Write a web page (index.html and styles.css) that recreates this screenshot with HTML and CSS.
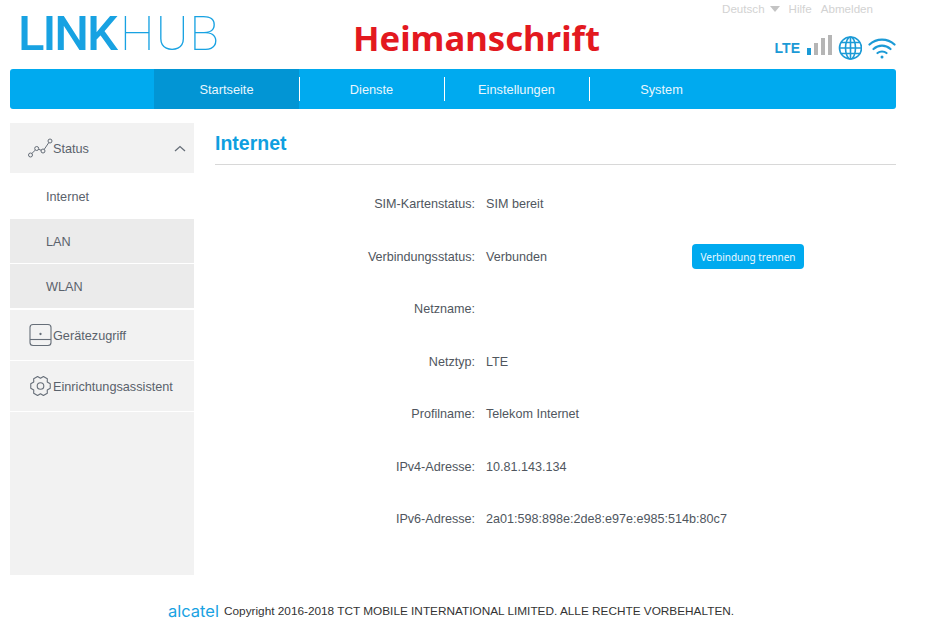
FILE: index.html
```html
<!DOCTYPE html>
<html lang="de">
<head>
    <meta charset="UTF-8">
    <meta name="viewport" content="width=device-width, initial-scale=1.0">
    <title>LinkHub</title>
    <link rel="stylesheet" href="styles.css">
</head>
<body>
    <div class="page">
        <header class="header">
            <div class="logo"><b>LINK</b><span>HUB</span></div>
            <div class="address">Heimanschrift</div>
            <div class="header-right">
                <div class="top-links">
                    <span>Deutsch</span>
                    <span class="caret"></span>
                    <span class="top-link">Hilfe</span>
                    <span>Abmelden</span>
                </div>
                <div class="status-icons">
                    <span class="lte">LTE</span>
                    <svg class="bars" width="25" height="20" viewBox="0 0 25 20">
                        <rect x="0" y="13" width="4" height="7" fill="#1b9ad6"/>
                        <rect x="7" y="8" width="4" height="12" fill="#b5b5b5"/>
                        <rect x="14" y="3" width="4" height="17" fill="#b5b5b5"/>
                        <rect x="21" y="0" width="4" height="20" fill="#b5b5b5"/>
                    </svg>
                    <svg width="24" height="24" viewBox="0 0 24 24" fill="none" stroke="#1b9ad6" stroke-width="1.6">
                        <circle cx="12.500" cy="12" r="11"/>
                        <ellipse cx="12.500" cy="12" rx="5" ry="11"/>
                        <path d="M12.500 1v22M1.500 12h22M3.100 6.500h18.800M3.100 17.500h18.800"/>
                    </svg>
                    <svg width="28" height="22" viewBox="0 0 28 22" fill="none" stroke="#1b9ad6" stroke-width="2.2" stroke-linecap="round">
                        <path d="M1.500 7.500C8.500 1 19.500 1 26.500 7.500"/>
                        <path d="M5.500 12C10.500 7.500 17.500 7.500 22.500 12"/>
                        <path d="M9.500 16C12 14 16 14 18.500 16"/>
                        <circle cx="14" cy="20" r="1.500" fill="#1b9ad6" stroke="none"/>
                    </svg>
                </div>
            </div>
        </header>

        <nav class="nav">
            <a class="nav-item active">Startseite</a>
            <a class="nav-item">Dienste</a>
            <a class="nav-item">Einstellungen</a>
            <a class="nav-item last">System</a>
        </nav>

        <div class="content">
            <aside class="sidebar">
                <div class="side-head first">
                    <svg width="25" height="20" viewBox="0 0 25 20" fill="none" stroke="#666e78" stroke-width="1">
                        <circle cx="2.500" cy="17" r="2"/>
                        <circle cx="8.700" cy="10.500" r="2"/>
                        <circle cx="15" cy="13" r="2"/>
                        <circle cx="22" cy="3" r="2"/>
                        <path d="M3.800 15.500L7.400 12M10.500 11.200L13.200 12.300M16.200 11.400L20.800 4.600"/>
                    </svg>
                    <span>Status</span>
                    <svg class="chevron" width="12" height="7" viewBox="0 0 12 7" fill="none" stroke="#666e78" stroke-width="1.300">
                        <path d="M1 6L6 1.500L11 6"/>
                    </svg>
                </div>
                <div class="side-sub current">Internet</div>
                <div class="side-sub">LAN</div>
                <div class="side-sub last">WLAN</div>
                <div class="side-head">
                    <svg width="25" height="24" viewBox="0 0 25 24" fill="none" stroke="#666e78" stroke-width="1.100">
                        <rect x="2" y="1.500" width="21" height="21" rx="3"/>
                        <path d="M2 16.500H23"/>
                        <circle cx="12.500" cy="11" r="0.600" fill="#666e78"/>
                    </svg>
                    <span>Gerätezugriff</span>
                </div>
                <div class="side-head">
                    <svg width="25" height="22" viewBox="-1.500 0 25 22" fill="none" stroke="#666e78" stroke-width="1.100" stroke-linejoin="round">
                        <path d="M20.740 8.750L20.740 13.250L17.750 14.900L17.820 18.310L13.920 20.560L11 18.800L8.080 20.560L4.180 18.310L4.250 14.900L1.260 13.250L1.260 8.750L4.250 7.100L4.180 3.690L8.080 1.440L11 3.200L13.920 1.440L17.820 3.690L17.750 7.100Z"/>
                        <circle cx="11" cy="11" r="3.300"/>
                    </svg>
                    <span>Einrichtungsassistent</span>
                </div>
            </aside>

            <main class="main">
                <h1 class="title">Internet</h1>
                <div class="rows">
                    <div class="row"><label>SIM-Kartenstatus:</label><span>SIM bereit</span></div>
                    <div class="row">
                        <label>Verbindungsstatus:</label><span class="value-short">Verbunden</span>
                        <button class="btn">Verbindung trennen</button>
                    </div>
                    <div class="row"><label>Netzname:</label><span></span></div>
                    <div class="row"><label>Netztyp:</label><span>LTE</span></div>
                    <div class="row"><label>Profilname:</label><span>Telekom Internet</span></div>
                    <div class="row"><label>IPv4-Adresse:</label><span>10.81.143.134</span></div>
                    <div class="row"><label>IPv6-Adresse:</label><span>2a01:598:898e:2de8:e97e:e985:514b:80c7</span></div>
                </div>
            </main>
        </div>

        <footer class="footer">
            <span class="alcatel">alcatel</span>
            <span>Copyright 2016-2018 TCT MOBILE INTERNATIONAL LIMITED. ALLE RECHTE VORBEHALTEN.</span>
        </footer>
    </div>
</body>
</html>
```

FILE: styles.css
```css
body {
    margin: 0;
    font-family: "Liberation Sans", Arial, sans-serif;
    background-color: #ffffff;
    color: #444c56;
}

.page {
    width: 886px;
    margin-left: 10px;
}

.header {
    display: flex;
    height: 69px;
}

.logo {
    width: 335px;
    margin-left: 8px;
    padding-top: 6px;
    font-family: Roboto, sans-serif;
    font-size: 49px;
    line-height: 56px;
    color: #18a2e2;
    white-space: nowrap;
}

.logo b {
    font-weight: 500;
    letter-spacing: -2px;
}

.logo span {
    font-weight: 100;
    margin-left: 4px;
    letter-spacing: 1.200px;
}

.address {
    width: 300px;
    padding-top: 17px;
    font-family: "Noto Sans", sans-serif;
    font-size: 34.700px;
    line-height: 42px;
    font-weight: 700;
    color: #e3191f;
    white-space: nowrap;
}

.header-right {
    flex: 1;
    display: flex;
    flex-direction: column;
    align-items: flex-end;
}

.top-links {
    display: flex;
    align-items: center;
    height: 17px;
    margin-right: 23px;
    font-size: 11.600px;
    color: #d2d2d2;
}

.top-link {
    margin-right: 9px;
}

.caret {
    width: 0;
    height: 0;
    margin-left: 5px;
    margin-right: 9px;
    border-left: 5.500px solid transparent;
    border-right: 5.500px solid transparent;
    border-top: 6px solid #c4c4c4;
}

.status-icons {
    display: flex;
    align-items: center;
    gap: 6px;
    margin-top: 18px;
}

.lte {
    font-size: 14px;
    font-weight: 700;
    color: #1b9ad6;
    margin-right: 1px;
}

.bars {
    margin-bottom: 6px;
}

.nav {
    display: flex;
    height: 40px;
    padding-left: 144px;
    background-color: #00aaef;
    border-radius: 3px;
}

.nav-item {
    width: 145px;
    display: flex;
    align-items: center;
    justify-content: center;
    font-size: 12.800px;
    color: #e8f6fd;
    position: relative;
}

.nav-item::after {
    content: "";
    position: absolute;
    right: -1px;
    top: 8px;
    height: 24px;
    width: 1px;
    background-color: #ffffff;
}

.nav-item.last::after {
    display: none;
}

.nav-item.active {
    background-color: #0295d4;
}

.content {
    display: flex;
    margin-top: 14px;
}

.sidebar {
    width: 184px;
    height: 452px;
    background-color: #f2f2f2;
    font-size: 12.700px;
    color: #5a626c;
}

.side-head {
    display: flex;
    align-items: center;
    height: 50px;
    padding-left: 18px;
    border-bottom: 1px solid #ffffff;
}

.side-head svg {
    flex: none;
}

.side-head span {
    margin-top: 2px;
}

.chevron {
    margin-left: auto;
    margin-right: 8px;
}

.side-sub {
    display: flex;
    align-items: center;
    height: 42px;
    padding-top: 2px;
    padding-left: 36px;
    background-color: #ebebeb;
    border-bottom: 1px solid #ffffff;
}

.side-sub.current {
    background-color: #ffffff;
}

.side-sub.last {
    border-bottom-width: 2px;
}

.main {
    flex: 1;
    margin-left: 21px;
}

.title {
    margin: 0;
    height: 41px;
    font-size: 19.500px;
    line-height: 41px;
    font-weight: 700;
    color: #0f9fe0;
    border-bottom: 1px solid #d8d8d8;
}

.rows {
    padding-top: 13px;
}

.row {
    display: flex;
    align-items: center;
    height: 52.500px;
    font-size: 12.600px;
    color: #50565e;
}

.row label {
    width: 260px;
    text-align: right;
    margin-right: 11px;
}

.value-short {
    width: 206px;
}

.btn {
    width: 112px;
    height: 25px;
    padding: 0;
    border: none;
    border-radius: 4px;
    font-family: "Noto Sans", sans-serif;
    font-size: 10px;
    color: #eaf8ff;
    background-color: #00aaef;
}

.footer {
    display: flex;
    align-items: center;
    height: 30px;
    margin-top: 21px;
    padding-left: 158px;
    font-size: 11.800px;
    color: #333333;
}

.alcatel {
    width: 56px;
    font-family: Inter, sans-serif;
    font-size: 16.500px;
    color: #18a2e2;
}
```
